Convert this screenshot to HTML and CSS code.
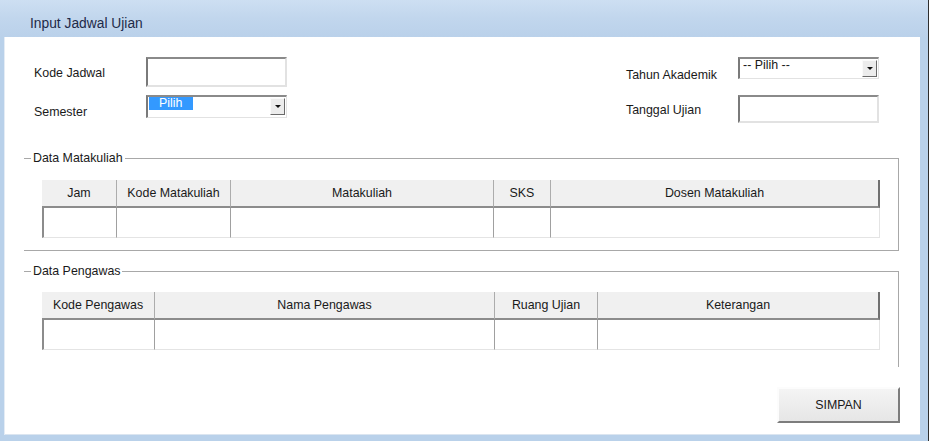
FILE: index.html
```html
<!DOCTYPE html>
<html lang="id">
<head>
    <meta charset="UTF-8">
    <title>Input Jadwal Ujian</title>
    <link rel="stylesheet" href="styles.css">
</head>
<body>
    <div class="window">
        <div class="titlebar">Input Jadwal Ujian</div>

        <div class="client">
            <!-- Header fields -->
            <div class="top">
                <div class="col">
                    <div class="field">
                        <label class="lbl lbl-kode">Kode Jadwal</label>
                        <input type="text" class="textbox tall">
                    </div>
                    <div class="field">
                        <label class="lbl lbl-semester">Semester</label>
                        <div class="combo">
                            <span class="combo-text selected">Pilih</span>
                            <span class="combo-btn"><i class="arrow"></i></span>
                        </div>
                    </div>
                </div>
                <div class="col">
                    <div class="field">
                        <label class="lbl lbl-tahun">Tahun Akademik</label>
                        <div class="combo short">
                            <span class="combo-text">-- Pilih --</span>
                            <span class="combo-btn"><i class="arrow"></i></span>
                        </div>
                    </div>
                    <div class="field">
                        <label class="lbl lbl-tanggal">Tanggal Ujian</label>
                        <input type="text" class="textbox mid">
                    </div>
                </div>
            </div>

            <!-- Data Matakuliah -->
            <fieldset class="group">
                <legend>Data Matakuliah</legend>
                <div class="group-body">
                    <table class="grid">
                        <colgroup>
                            <col style="width:75px">
                            <col style="width:114px">
                            <col style="width:263px">
                            <col style="width:57px">
                            <col style="width:329px">
                        </colgroup>
                        <thead>
                            <tr>
                                <th>Jam</th>
                                <th>Kode Matakuliah</th>
                                <th>Matakuliah</th>
                                <th>SKS</th>
                                <th>Dosen Matakuliah</th>
                            </tr>
                        </thead>
                        <tbody>
                            <tr><td></td><td></td><td></td><td></td><td></td></tr>
                        </tbody>
                    </table>
                </div>
            </fieldset>

            <!-- Data Pengawas -->
            <fieldset class="group open">
                <legend>Data Pengawas</legend>
                <div class="group-body">
                    <table class="grid">
                        <colgroup>
                            <col style="width:113px">
                            <col style="width:340px">
                            <col style="width:103px">
                            <col style="width:282px">
                        </colgroup>
                        <thead>
                            <tr>
                                <th>Kode Pengawas</th>
                                <th>Nama Pengawas</th>
                                <th>Ruang Ujian</th>
                                <th>Keterangan</th>
                            </tr>
                        </thead>
                        <tbody>
                            <tr><td></td><td></td><td></td><td></td></tr>
                        </tbody>
                    </table>
                </div>
            </fieldset>

            <div class="actions">
                <button class="btn">SIMPAN</button>
            </div>
        </div>
    </div>
</body>
</html>
```

FILE: styles.css
```css
body {
    margin: 0;
    background: #b9d1ea;
    font-family: 'Liberation Sans', Arial, sans-serif;
    font-size: 12.4px;
    color: #1a1a1a;
    overflow: hidden;
}
.window {
    width: 929px;
    height: 441px;
    box-sizing: border-box;
    border-right: 1px solid #2e2e2e;
    background: #b9d1ea;
}
.titlebar {
    height: 37px;
    box-sizing: border-box;
    padding: 16px 0 0 30px;
    line-height: 16px;
    font-size: 13.8px;
    color: #1e2a48;
    background: linear-gradient(to bottom, #cddff2 0%, #c1d6ed 50%, #bad1ea 100%);
}
.client {
    margin: 0 8px 0 4px;
    height: 398px;
    background: #fff;
    box-shadow: inset 1px 0 0 #e4ecf5, inset 0 -1px 0 #dbe5f0;
    overflow: hidden;
}

/* Top fields */
.top {
    height: 114px;
    box-sizing: border-box;
    padding: 20px 41px 0 30px;
    display: flex;
    justify-content: space-between;
}
.col {
    display: grid;
    grid-template-rows: 38px auto;
}
.field {
    display: flex;
    align-items: flex-start;
}
.lbl {
    width: 112px;
    line-height: 14px;
}
.lbl-kode { margin-top: 9px; }
.lbl-semester { margin-top: 10px; }
.lbl-tahun { margin-top: 11px; }
.lbl-tanggal { margin-top: 8px; }

.textbox {
    width: 141px;
    box-sizing: border-box;
    margin: 0;
    padding: 0 3px;
    border: 2px solid;
    border-color: #8a8a8a #e2e2e2 #e2e2e2 #7a7a7a;
    background: #fff;
    outline: none;
    font: inherit;
}
.textbox.tall { height: 30px; }
.textbox.mid { height: 28px; }

.combo {
    width: 141px;
    height: 23px;
    box-sizing: border-box;
    border: 2px solid;
    border-color: #8a8a8a #e2e2e2 #e2e2e2 #7a7a7a;
    border-right-width: 1px;
    border-bottom-width: 1px;
    display: flex;
    justify-content: space-between;
    align-items: flex-start;
    padding-right: 1px;
    background: #fff;
}
.combo.short { height: 22px; }
.combo-text {
    line-height: 13px;
    padding: 0 2px;
    margin-left: 1px;
    white-space: nowrap;
}
.combo-text.selected {
    width: 44px;
    box-sizing: border-box;
    padding-left: 10px;
    background: #3399ff;
    color: #fff;
}
.combo-btn {
    width: 15px;
    height: 17px;
    margin-top: 1px;
    box-sizing: border-box;
    border: 1px solid;
    border-color: #fafafa #6a6a6a #6a6a6a #fafafa;
    background: #ececec;
    display: flex;
    align-items: center;
    justify-content: center;
}
.arrow {
    width: 0;
    height: 0;
    border-left: 3px solid transparent;
    border-right: 3px solid transparent;
    border-top: 3px solid #111;
}

/* Group boxes */
.group {
    margin: 0 21px 0 20px;
    padding: 0;
    min-width: 0;
    border: 1px solid #a8a8a8;
    border-left: none;
}
.group legend {
    margin-left: 7px;
    padding: 0 2px;
    line-height: 14px;
}
.group-body {
    padding: 15px 18px 12px 18px;
}
.group.open {
    margin-top: 13px;
    border-bottom: none;
}
.group.open .group-body {
    padding: 14px 18px 17px 18px;
}

/* Grids */
.grid {
    width: 838px;
    table-layout: fixed;
    border-collapse: separate;
    border-spacing: 0;
}
.grid th {
    height: 26px;
    padding: 0;
    background: #f0f0f0;
    font-weight: normal;
    text-align: center;
    white-space: nowrap;
    border-right: 1px solid #acacac;
    border-bottom: 2px solid #8c8c8c;
}
.grid th:last-child {
    border-right: 2px solid #707070;
}
.grid td {
    height: 29px;
    padding: 0;
    border-right: 1px solid #a0a0a0;
    border-bottom: 1px solid #e4e4e4;
}
.grid td:first-child {
    border-left: 2px solid #8c8c8c;
}
.grid td:last-child {
    border-right: 1px solid #e4e4e4;
}

/* Button */
.actions {
    display: flex;
    justify-content: flex-end;
    padding: 20px 20px 0 0;
}
.btn {
    width: 123px;
    height: 36px;
    box-sizing: border-box;
    border: 2px solid;
    border-color: #fcfcfc #7d7d7d #7d7d7d #fcfcfc;
    background: linear-gradient(to bottom, #f4f4f4, #e6e6e6);
    font: inherit;
    color: #1a1a1a;
}
```
